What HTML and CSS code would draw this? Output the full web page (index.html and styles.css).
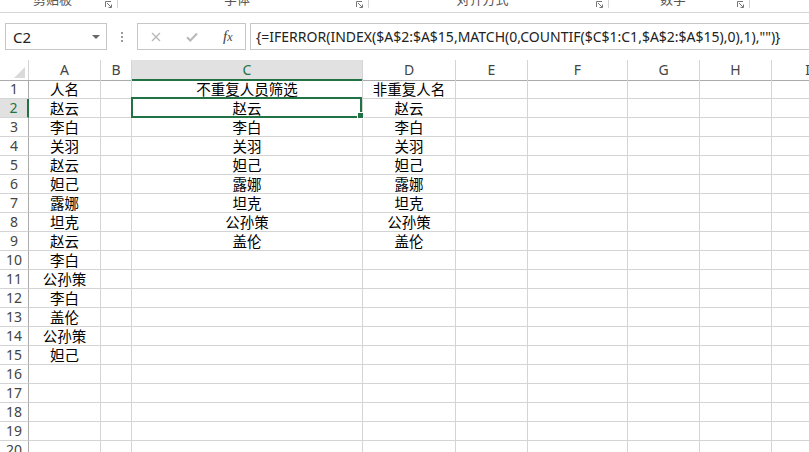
FILE: index.html
```html
<!DOCTYPE html>
<html lang="zh-CN">
  <head>
    <meta charset="UTF-8" />
    <meta name="viewport" content="width=device-width, initial-scale=1.0" />
    <title>人员筛选</title>
    <link rel="stylesheet" href="styles.css">
  </head>
  <body>
    <!-- Pie de los grupos de la cinta -->
    <div class="ribbon">
      <div class="group g1">
        <span class="group-label">剪贴板</span>
        <svg class="launcher" width="7" height="7" viewBox="0 0 7 7"><path d="M0.5 6V0.5H6M2 2L6.2 6.2M3.5 6.5H6.5V3.5" /></svg>
      </div>
      <div class="group g2">
        <span class="group-label">字体</span>
        <svg class="launcher" width="7" height="7" viewBox="0 0 7 7"><path d="M0.5 6V0.5H6M2 2L6.2 6.2M3.5 6.5H6.5V3.5" /></svg>
      </div>
      <div class="group g3">
        <span class="group-label">对齐方式</span>
        <svg class="launcher" width="7" height="7" viewBox="0 0 7 7"><path d="M0.5 6V0.5H6M2 2L6.2 6.2M3.5 6.5H6.5V3.5" /></svg>
      </div>
      <div class="group g4">
        <span class="group-label">数字</span>
        <svg class="launcher" width="7" height="7" viewBox="0 0 7 7"><path d="M0.5 6V0.5H6M2 2L6.2 6.2M3.5 6.5H6.5V3.5" /></svg>
      </div>
    </div>

    <!-- Barra de fórmulas -->
    <div class="formula-bar">
      <div class="name-box">
        <span>C2</span>
        <span class="caret"></span>
      </div>
      <div class="grip"><i></i><i></i><i></i></div>
      <div class="fx-buttons">
        <svg width="10" height="10" viewBox="0 0 10 10"><path d="M1 1L9 9M9 1L1 9" /></svg>
        <svg width="12" height="10" viewBox="0 0 12 10"><path d="M1 5.2L4.3 8.5L11 1.5" /></svg>
        <span class="fx">f<span>x</span></span>
      </div>
      <div class="formula">{=IFERROR(INDEX($A$2:$A$15,MATCH(0,COUNTIF($C$1:C1,$A$2:$A$15),0),1),"")}</div>
    </div>

    <!-- Hoja -->
    <div class="sheet">
      <div class="row head"><div class="corner"><span></span></div><div>A</div><div>B</div><div class="active">C</div><div>D</div><div>E</div><div>F</div><div>G</div><div>H</div><div>I</div></div>
      <div class="row"><div class="rh">1</div><div>人名</div><div></div><div>不重复人员筛选</div><div>非重复人名</div><div></div><div></div><div></div><div></div><div></div></div>
      <div class="row"><div class="rh active">2</div><div>赵云</div><div></div><div class="selected">赵云<span class="handle"></span></div><div>赵云</div><div></div><div></div><div></div><div></div><div></div></div>
      <div class="row"><div class="rh">3</div><div>李白</div><div></div><div>李白</div><div>李白</div><div></div><div></div><div></div><div></div><div></div></div>
      <div class="row"><div class="rh">4</div><div>关羽</div><div></div><div>关羽</div><div>关羽</div><div></div><div></div><div></div><div></div><div></div></div>
      <div class="row"><div class="rh">5</div><div>赵云</div><div></div><div>妲己</div><div>妲己</div><div></div><div></div><div></div><div></div><div></div></div>
      <div class="row"><div class="rh">6</div><div>妲己</div><div></div><div>露娜</div><div>露娜</div><div></div><div></div><div></div><div></div><div></div></div>
      <div class="row"><div class="rh">7</div><div>露娜</div><div></div><div>坦克</div><div>坦克</div><div></div><div></div><div></div><div></div><div></div></div>
      <div class="row"><div class="rh">8</div><div>坦克</div><div></div><div>公孙策</div><div>公孙策</div><div></div><div></div><div></div><div></div><div></div></div>
      <div class="row"><div class="rh">9</div><div>赵云</div><div></div><div>盖伦</div><div>盖伦</div><div></div><div></div><div></div><div></div><div></div></div>
      <div class="row"><div class="rh">10</div><div>李白</div><div></div><div></div><div></div><div></div><div></div><div></div><div></div><div></div></div>
      <div class="row"><div class="rh">11</div><div>公孙策</div><div></div><div></div><div></div><div></div><div></div><div></div><div></div><div></div></div>
      <div class="row"><div class="rh">12</div><div>李白</div><div></div><div></div><div></div><div></div><div></div><div></div><div></div><div></div></div>
      <div class="row"><div class="rh">13</div><div>盖伦</div><div></div><div></div><div></div><div></div><div></div><div></div><div></div><div></div></div>
      <div class="row"><div class="rh">14</div><div>公孙策</div><div></div><div></div><div></div><div></div><div></div><div></div><div></div><div></div></div>
      <div class="row"><div class="rh">15</div><div>妲己</div><div></div><div></div><div></div><div></div><div></div><div></div><div></div><div></div></div>
      <div class="row"><div class="rh">16</div><div></div><div></div><div></div><div></div><div></div><div></div><div></div><div></div><div></div></div>
      <div class="row"><div class="rh">17</div><div></div><div></div><div></div><div></div><div></div><div></div><div></div><div></div><div></div></div>
      <div class="row"><div class="rh">18</div><div></div><div></div><div></div><div></div><div></div><div></div><div></div><div></div><div></div></div>
      <div class="row"><div class="rh">19</div><div></div><div></div><div></div><div></div><div></div><div></div><div></div><div></div><div></div></div>
      <div class="row"><div class="rh">20</div><div></div><div></div><div></div><div></div><div></div><div></div><div></div><div></div><div></div></div>
    </div>
  </body>
</html>
```

FILE: styles.css
```css
body {
  margin: 0;
  overflow: hidden;
  background: #fff;
  font-family: "Noto Sans", "Noto Sans CJK SC", sans-serif;
  color: #000;
}

/* cinta */
.ribbon {
  display: flex;
  height: 12px;
  border-bottom: 1px solid #d6d6d6;
  overflow: hidden;
}
.group {
  display: flex;
  align-items: flex-start;
  border-right: 1px solid #d4d4d4;
  height: 8px;
}
.g1 { width: 117px; }
.g2 { width: 250px; }
.g3 { width: 239px; }
.g4 { width: 140px; }
.group-label {
  flex: 1;
  text-align: center;
  font-size: 13px;
  line-height: 13px;
  margin-top: -7px;
  color: #555;
}
.launcher {
  margin: 1px 5px 0 0;
  fill: none;
  stroke: #777;
  stroke-width: 1;
}

/* barra de fórmulas */
.formula-bar {
  display: flex;
  align-items: center;
  padding: 10px 0;
}
.name-box,
.fx-buttons,
.formula {
  box-sizing: border-box;
  height: 27px;
  border: 1px solid #c6c6c6;
  background: #fff;
}
.name-box {
  width: 102px;
  margin-left: 5px;
  display: flex;
  align-items: center;
  justify-content: space-between;
  padding: 0 6px 0 7px;
  font-size: 15px;
  color: #222;
}
.caret {
  width: 0;
  height: 0;
  border-top: 4px solid #666;
  border-left: 4px solid transparent;
  border-right: 4px solid transparent;
}
.grip {
  width: 2px;
  margin: 0 14px;
  display: flex;
  flex-direction: column;
  gap: 2px;
}
.grip i {
  display: block;
  width: 2px;
  height: 2px;
  background: #9a9a9a;
}
.fx-buttons {
  width: 109px;
  display: flex;
  align-items: center;
  padding-left: 13px;
}
.fx-buttons svg {
  fill: none;
  stroke: #b8b8b8;
}
.fx-buttons svg:first-child {
  stroke-width: 1.4;
  margin-right: 25px;
}
.fx-buttons svg:nth-child(2) {
  stroke-width: 2;
  margin-right: 25px;
}
.fx {
  font-family: "Liberation Serif", serif;
  font-style: italic;
  font-size: 15px;
  color: #444;
}
.fx span {
  font-size: 12px;
}
.formula {
  flex: 1;
  margin-left: 4px;
  border-right: none;
  padding-left: 5px;
  font-size: 14px;
  line-height: 25px;
  white-space: nowrap;
  color: #222;
}

/* hoja */
.row {
  display: grid;
  grid-template-columns: 29px 72px 31px 231px 93px 72px 100px 72px 72px 72px;
  height: 19px;
}
.row > div {
  box-sizing: border-box;
  border-right: 1px solid #d4d4d4;
  border-bottom: 1px solid #d4d4d4;
  text-align: center;
  font-size: 14.5px;
  line-height: 18px;
  white-space: nowrap;
}
.head {
  height: 20px;
}
.head > div {
  border-bottom: 1px solid #ababab;
  font-size: 14px;
  line-height: 19px;
  color: #444;
}
.head > .active {
  background: #e1e1e1;
  border-bottom: 2px solid #217346;
  color: #217346;
}
.corner {
  display: flex;
  align-items: flex-end;
  justify-content: flex-end;
  padding: 0 3px 2px 0;
}
.corner span {
  width: 0;
  height: 0;
  border-left: 11px solid transparent;
  border-bottom: 11px solid #dadada;
}
.row > .rh {
  border-right-color: #ababab;
  font-size: 14px;
  color: #444;
}
.row > .rh.active {
  background: #e1e1e1;
  border-right: 2px solid #217346;
  color: #217346;
}
.selected {
  position: relative;
}
.selected::after {
  content: "";
  position: absolute;
  top: -2px;
  left: -1px;
  right: 0;
  bottom: -1px;
  border: 2px solid #217346;
}
.handle {
  position: absolute;
  right: -1px;
  bottom: -1px;
  width: 5px;
  height: 5px;
  background: #217346;
  box-shadow: 0 0 0 1px #fff;
  z-index: 1;
}
```
